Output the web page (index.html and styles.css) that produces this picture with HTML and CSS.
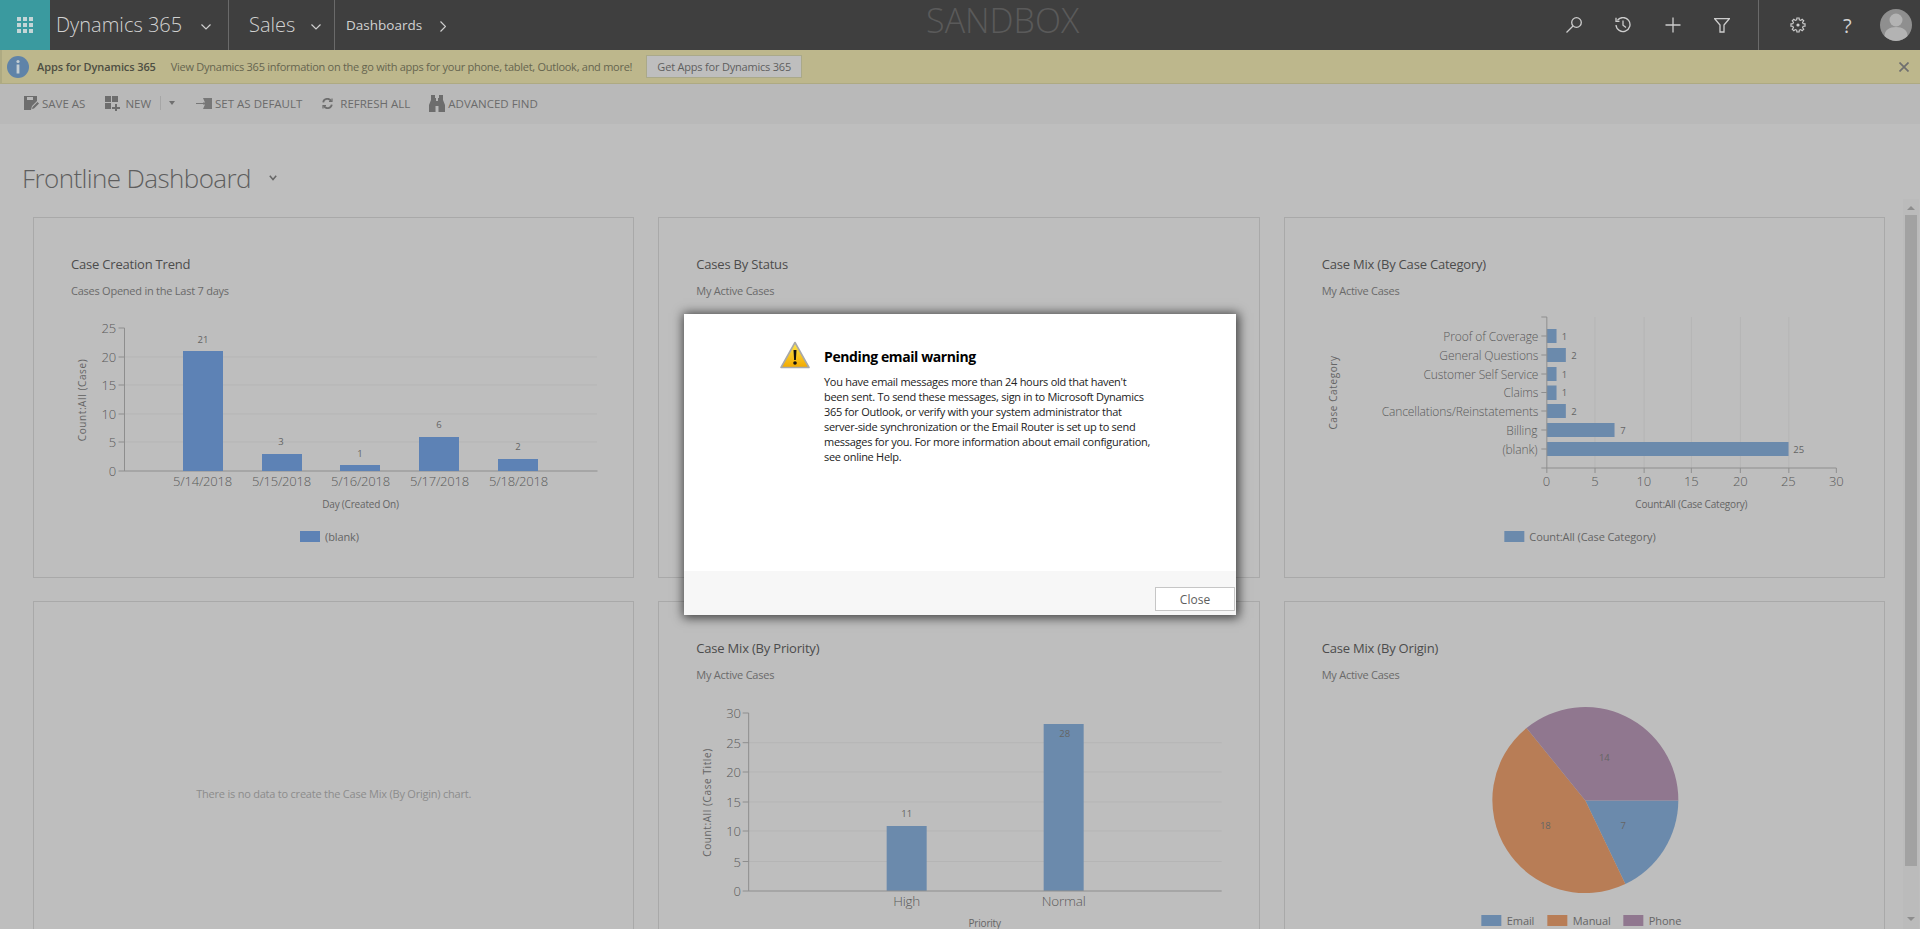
FILE: index.html
```html
<!DOCTYPE html>
<html lang="en">
<head>
  <meta charset="UTF-8">
  <title>Frontline Dashboard</title>
  <link rel="stylesheet" href="styles.css">
</head>
<body>
  <header class="topbar">
    <div class="tile">
      <svg width="16" height="16" viewBox="0 0 16 16" fill="#c4d6d7"><path d="M0 0h4v4H0zM6 0h4v4H6zM12 0h4v4h-4zM0 6h4v4H0zM6 6h4v4H6zM12 6h4v4h-4zM0 12h4v4H0zM6 12h4v4H6zM12 12h4v4h-4z"/></svg>
    </div>
    <div class="nav nav-app">
      <span>Dynamics 365</span>
      <svg class="chev" width="10" height="6" viewBox="0 0 10 6"><path d="M.5.5 5 5 9.500.5"/></svg>
    </div>
    <div class="nav nav-area">
      <span>Sales</span>
      <svg class="chev" width="10" height="6" viewBox="0 0 10 6"><path d="M.5.5 5 5 9.500.5"/></svg>
    </div>
    <div class="nav nav-page">
      <span>Dashboards</span>
      <svg class="chev" width="6" height="11" viewBox="0 0 6 11"><path d="M.5.5 5.500 5.500.5 10.500"/></svg>
    </div>
    <div class="env">SANDBOX</div>
    <div class="tools">
      <div class="tool">
        <svg class="line" width="16" height="16" viewBox="0 0 16 16"><circle cx="10.500" cy="5.500" r="4.800"/><path d="M7 9 .5 15.500"/></svg>
      </div>
      <div class="tool">
        <svg class="line" width="16" height="16" viewBox="0 0 16 16"><path d="M2.400 3.300A7 7 0 1 1 1 8"/><path d="M1 .8v3.500h3.500M8 3.500v4.700l3 2.300"/></svg>
      </div>
      <div class="tool">
        <svg class="line" width="16" height="16" viewBox="0 0 16 16"><path d="M8 .5v15M.5 8h15"/></svg>
      </div>
      <div class="tool">
        <svg class="line" width="16" height="15" viewBox="0 0 16 15"><path d="M.5.5h15L10 7v7H6V7z"/></svg>
      </div>
    </div>
    <div class="tools tools-user">
      <div class="tool">
        <svg class="line" width="16" height="16" viewBox="-9 -9 18 18"><polygon points="5.820,-1.450 7.900,-1.250 7.900,1.250 5.820,1.450 5.140,3.090 6.470,4.700 4.700,6.470 3.090,5.140 1.450,5.820 1.250,7.900 -1.250,7.900 -1.450,5.820 -3.090,5.140 -4.700,6.470 -6.470,4.700 -5.140,3.090 -5.820,1.450 -7.900,1.250 -7.900,-1.250 -5.820,-1.450 -5.140,-3.090 -6.470,-4.700 -4.700,-6.470 -3.090,-5.140 -1.450,-5.820 -1.250,-7.900 1.250,-7.900 1.450,-5.820 3.090,-5.140 4.700,-6.470 6.470,-4.700 5.140,-3.090"/><circle cx="0" cy="0" r="1.800" class="dot"/></svg>
      </div>
      <div class="tool help">?</div>
      <svg class="avatar" width="32" height="32" viewBox="0 0 32 32"><circle cx="16" cy="16" r="16" fill="#8f8f8f"/><circle cx="16" cy="11" r="6.500" fill="#b3b3b3"/><path d="M4.500 27c0-6 5-9 11.500-9s11.500 3 11.500 9a16 16 0 0 1-23 0z" fill="#b3b3b3"/></svg>
    </div>
  </header>

  <div class="notice">
    <svg class="info" width="22" height="22" viewBox="0 0 22 22"><circle cx="11" cy="11" r="11" fill="#5f83a8"/><circle cx="11" cy="5.500" r="1.600" fill="#c3cdd2"/><rect x="9.600" y="8.500" width="2.800" height="9" fill="#c3cdd2"/></svg>
    <strong class="notice-title">Apps for Dynamics 365</strong>
    <span class="notice-text">View Dynamics 365 information on the go with apps for your phone, tablet, Outlook, and more!</span>
    <button class="notice-btn">Get Apps for Dynamics 365</button>
    <svg class="notice-close" width="10" height="10" viewBox="0 0 10 10"><path d="M.5.5l9 9M9.500.5l-9 9"/></svg>
  </div>

  <div class="toolbar">
    <div class="cmd cmd-save">
      <svg width="15" height="15" viewBox="0 0 15 15" fill="#6d6d6d"><path d="M0 0h13v5l-5 5-1 4H0zM3 1v3h6V1zM8.500 11l5-5 1.500 1.500-5 5-2 .5z"/></svg>
      <span>SAVE AS</span>
    </div>
    <div class="cmd cmd-new">
      <svg width="15" height="15" viewBox="0 0 15 15" fill="#6d6d6d"><path d="M0 0h6v6H0zM7 0h6v6H7zM0 7h6v6H0zM10 8h2v3h3v2h-3v2h-2v-2H7v-2h3z"/></svg>
      <span>NEW</span>
    </div>
    <i class="cmd-sep"></i>
    <i class="cmd-caret"></i>
    <div class="cmd cmd-default">
      <svg width="16" height="11" viewBox="0 0 16 11" fill="#777"><path d="M0 5h7V4.500h2L7 0h9v11H7l2-4.500H7V6H0z"/></svg>
      <span>SET AS DEFAULT</span>
    </div>
    <div class="cmd cmd-refresh">
      <svg width="11" height="11" viewBox="0 0 11 11" fill="none" stroke="#6d6d6d" stroke-width="1.800"><path d="M1.200 4.300A4.200 4.200 0 0 1 9 3M9.800 6.700A4.200 4.200 0 0 1 2 8"/><path d="M10 .5V3.500H7M1 10.500V7.500h3" stroke-width="1.200"/></svg>
      <span>REFRESH ALL</span>
    </div>
    <div class="cmd cmd-find">
      <svg width="16" height="17" viewBox="0 0 16 17" fill="#6d6d6d"><path d="M2 0h4v3h1v3h2V3h1V0h4v5l2 5v7H9.500v-6h-3v6H0v-7l2-5z"/></svg>
      <span>ADVANCED FIND</span>
    </div>
  </div>

  <div class="heading">
    <h1>Frontline Dashboard</h1>
    <svg class="heading-chev" width="8" height="6" viewBox="0 0 8 6"><path d="M.8.8 4 4.500 7.200.8"/></svg>
  </div>

  <main class="workspace">
    <div class="grid">
      <section class="card">
        <h2>Case Creation Trend</h2>
        <p>Cases Opened in the Last 7 days</p>
        <svg class="chart" width="600" height="272" viewBox="34 305 600 272">
          <path class="grid-line" d="M125 357h472M125 385h472M125 414h472M125 442h472"/>
          <path class="axis" d="M118.500 328h6v143M118.500 471h479M118.500 357h6M118.500 385h6M118.500 414h6M118.500 442h6"/>
          <g class="tick end">
            <text x="116" y="328">25</text><text x="116" y="357">20</text><text x="116" y="385">15</text>
            <text x="116" y="414">10</text><text x="116" y="442">5</text><text x="116" y="471">0</text>
          </g>
          <g fill="#5d82b5">
            <rect x="183" y="351" width="40" height="120"/>
            <rect x="262" y="454" width="40" height="17"/>
            <rect x="340" y="465" width="40" height="6"/>
            <rect x="419" y="437" width="40" height="34"/>
            <rect x="498" y="459" width="40" height="12"/>
          </g>
          <g class="val">
            <text x="203" y="339">21</text><text x="281" y="441">3</text><text x="360" y="453">1</text>
            <text x="439" y="424">6</text><text x="518" y="446">2</text>
          </g>
          <g class="tick mid">
            <text x="202.500" y="481">5/14/2018</text><text x="281.500" y="481">5/15/2018</text><text x="360.500" y="481">5/16/2018</text>
            <text x="439.500" y="481">5/17/2018</text><text x="518.500" y="481">5/18/2018</text>
          </g>
          <text class="axis-title" x="360.500" y="504">Day (Created On)</text>
          <text class="axis-title side" x="82" y="400" transform="rotate(-90 82 400)">Count:All (Case)</text>
          <rect x="300" y="531" width="20" height="11" fill="#5d82b5"/>
          <text class="legend" x="325" y="536">(blank)</text>
        </svg>
      </section>

      <section class="card">
        <h2>Cases By Status</h2>
        <p>My Active Cases</p>
      </section>

      <section class="card">
        <h2>Case Mix (By Case Category)</h2>
        <p>My Active Cases</p>
        <svg class="chart" width="600" height="272" viewBox="1284.670 305 600 272">
          <path class="grid-line" d="M1594.700 317v151M1643.800 317v151M1691 317v151M1740 317v151M1788.500 317v151"/>
          <g fill="#6b8aac">
            <rect x="1546.500" y="329" width="9.700" height="14"/>
            <rect x="1546.500" y="348" width="19" height="14"/>
            <rect x="1546.500" y="367" width="9.700" height="14"/>
            <rect x="1546.500" y="385.500" width="9.700" height="14.500"/>
            <rect x="1546.500" y="404" width="19" height="14"/>
            <rect x="1546.500" y="423" width="67.700" height="14"/>
            <rect x="1546.500" y="442" width="241.700" height="14"/>
          </g>
          <path class="axis" d="M1541 317h5.500v151M1541 468h295M1541 336h5.500M1541 355h5.500M1541 374h5.500M1541 392.500h5.500M1541 411h5.500M1541 430h5.500M1541 449h5.500M1546.500 468v5M1594.700 468v5M1643.800 468v5M1691 468v5M1740 468v5M1788.500 468v5M1836 468v5"/>
          <g class="tick end cat">
            <text x="1538" y="336">Proof of Coverage</text><text x="1538" y="355">General Questions</text><text x="1538" y="374">Customer Self Service</text>
            <text x="1538" y="392.500">Claims</text><text x="1538" y="411">Cancellations/Reinstatements</text><text x="1537" y="430">Billing</text><text x="1537" y="449">(blank)</text>
          </g>
          <g class="val start">
            <text x="1561.500" y="336">1</text><text x="1571" y="355">2</text><text x="1561.500" y="374">1</text>
            <text x="1561.500" y="392.500">1</text><text x="1571" y="411">2</text><text x="1620" y="430">7</text><text x="1793" y="449">25</text>
          </g>
          <g class="tick mid">
            <text x="1546" y="481">0</text><text x="1594.500" y="481">5</text><text x="1643.500" y="481">10</text><text x="1691" y="481">15</text>
            <text x="1740" y="481">20</text><text x="1788" y="481">25</text><text x="1836" y="481">30</text>
          </g>
          <text class="axis-title" x="1691" y="504">Count:All (Case Category)</text>
          <text class="axis-title side" x="1333" y="392.500" transform="rotate(-90 1333 392.500)">Case Category</text>
          <rect x="1504" y="531" width="20" height="11" fill="#6b8aac"/>
          <text class="legend" x="1529" y="536">Count:All (Case Category)</text>
        </svg>
      </section>

      <section class="card card-empty">
        <div class="empty-msg">There is no data to create the Case Mix (By Origin) chart.</div>
      </section>

      <section class="card">
        <h2>Case Mix (By Priority)</h2>
        <p>My Active Cases</p>
        <svg class="chart" width="600" height="272" viewBox="659.330 689 600 272">
          <path class="grid-line" d="M749 742.700h473M749 772h473M749 802h473M749 831h473M749 861.500h473"/>
          <g fill="#6b8aac">
            <rect x="887" y="826" width="40" height="65"/>
            <rect x="1044" y="724" width="40" height="167"/>
          </g>
          <path class="axis" d="M743 713h6v178M743 891h479M743 742.700h6M743 772h6M743 802h6M743 831h6M743 861.500h6"/>
          <g class="tick end">
            <text x="741" y="713">30</text><text x="741" y="742.700">25</text><text x="741" y="772">20</text><text x="741" y="802">15</text>
            <text x="741" y="831">10</text><text x="741" y="861.500">5</text><text x="741" y="891">0</text>
          </g>
          <g class="val">
            <text x="907" y="813">11</text><text x="1065" y="733.500">28</text>
          </g>
          <g class="tick mid large">
            <text x="907" y="901">High</text><text x="1064" y="901">Normal</text>
          </g>
          <text class="axis-title" x="985" y="923">Priority</text>
          <text class="axis-title side" x="707" y="802.500" transform="rotate(-90 707 802.500)">Count:All (Case Title)</text>
        </svg>
      </section>

      <section class="card">
        <h2>Case Mix (By Origin)</h2>
        <p>My Active Cases</p>
        <svg class="chart" width="600" height="272" viewBox="1284.670 689 600 272">
          <path d="M1585 800.500h93A93 93 0 0 1 1625 884z" fill="#6b8aac"/>
          <path d="M1585 800.500 1625 884A93 93 0 0 1 1526.200 728z" fill="#b87d56"/>
          <path d="M1585 800.500 1526.200 728A93 93 0 0 1 1678 800.500z" fill="#90778f"/>
          <g class="val">
            <text x="1604" y="757">14</text><text x="1545" y="825">18</text><text x="1623" y="825">7</text>
          </g>
          <rect x="1481" y="915" width="20" height="11" fill="#6b8aac"/>
          <text class="legend" x="1506.500" y="920.500">Email</text>
          <rect x="1547" y="915" width="20" height="11" fill="#b87d56"/>
          <text class="legend" x="1572.500" y="920.500">Manual</text>
          <rect x="1623" y="915" width="20" height="11" fill="#90778f"/>
          <text class="legend" x="1648.500" y="920.500">Phone</text>
        </svg>
      </section>
    </div>

    <div class="scrollbar">
      <i class="arrow-up"></i>
      <div class="thumb"></div>
      <i class="arrow-down"></i>
    </div>
  </main>

  <div class="dialog">
    <div class="dialog-body">
      <svg class="warn" width="30" height="28" viewBox="0 0 30 28">
        <defs>
          <linearGradient id="warnFill" x1="0" y1="0" x2="0" y2="1">
            <stop offset="0" stop-color="#ffe84d"/>
            <stop offset="1" stop-color="#f2a900"/>
          </linearGradient>
        </defs>
        <path d="M15 1.500 29 26.500H1z" fill="url(#warnFill)" stroke="#a9a9a9" stroke-width="1.600" stroke-linejoin="round"/>
        <path d="M13.500 9h3l-.6 10h-1.800z" fill="#111"/>
        <circle cx="15" cy="22" r="1.800" fill="#111"/>
      </svg>
      <div class="dialog-copy">
        <h3>Pending email warning</h3>
        <p>You have email messages more than 24 hours old that haven't<br>
        been sent. To send these messages, sign in to Microsoft Dynamics<br>
        365 for Outlook, or verify with your system administrator that<br>
        server-side synchronization or the Email Router is set up to send<br>
        messages for you. For more information about email configuration,<br>
        see online Help.</p>
      </div>
    </div>
    <div class="dialog-foot">
      <button class="dialog-btn">Close</button>
    </div>
  </div>
</body>
</html>
```

FILE: styles.css
```css
* {
  box-sizing: border-box;
}
html, body {
  height: 100%;
  margin: 0;
  overflow: hidden;
}
body {
  display: flex;
  flex-direction: column;
  font-family: "Open Sans", "Noto Sans", sans-serif;
  background: #bebebe;
  color: #5e5e5e;
}

/* top bar */
.topbar {
  height: 50px;
  flex: none;
  display: flex;
  align-items: stretch;
  background: #3f3f3f;
  color: #d2d2d2;
}
.tile {
  width: 50px;
  background: #3a9a9f;
  display: flex;
  align-items: center;
  justify-content: center;
}
.nav {
  display: flex;
  align-items: center;
  border-right: 1px solid #6a6a6a;
}
.nav-app {
  width: 179px;
  padding-left: 6px;
  font-size: 20px;
  font-weight: 300;
  gap: 19px;
}
.nav-app span,
.nav-area span {
  margin-bottom: 2px;
}
.nav-area {
  width: 106px;
  padding-left: 20px;
  font-size: 20px;
  font-weight: 300;
  gap: 16px;
}
.nav-page {
  padding-left: 11px;
  border-right: 0;
  font-size: 13.500px;
  gap: 18px;
}
.chev {
  fill: none;
  stroke: #cfcfcf;
  stroke-width: 1.200;
  margin-top: 3px;
}
.env {
  margin-left: 480px;
  font-size: 34px;
  font-weight: 300;
  line-height: 40px;
  color: #5a5a5a;
}
.tools {
  display: flex;
  align-items: center;
  margin-left: auto;
}
.tools-user {
  margin-left: 11px;
  padding-left: 14px;
  padding-right: 8px;
  border-left: 1px solid #6a6a6a;
}
.tool {
  width: 49.500px;
  display: flex;
  align-items: center;
  justify-content: center;
}
.line {
  fill: none;
  stroke: #cdcdcd;
  stroke-width: 1.300;
}
.line .dot {
  fill: #cdcdcd;
  stroke: none;
}
.help {
  font-size: 20px;
  color: #d2d2d2;
}
.avatar {
  margin-left: 8px;
}

/* notification */
.notice {
  height: 34px;
  flex: none;
  display: flex;
  align-items: center;
  padding-left: 5px;
  padding-right: 11px;
  background: #bdb78c;
  border-bottom: 1px solid #aeaa82;
  border-left: 2px solid #aeaa82;
  font-size: 11px;
}
.notice-title {
  margin-left: 8px;
  font-weight: 600;
  letter-spacing: -.1px;
  color: #4e4e42;
}
.notice-text {
  margin-left: 15px;
  letter-spacing: -.27px;
  color: #66654f;
}
.notice-btn {
  margin-left: 14px;
  width: 156px;
  height: 23px;
  padding: 0;
  border: 1px solid #aaa98a;
  background: #bebebe;
  font-family: inherit;
  font-size: 11px;
  letter-spacing: -.2px;
  color: #5e5e5e;
}
.notice-close {
  margin-left: auto;
  fill: none;
  stroke: #6f6f6f;
  stroke-width: 1.700;
}

/* command bar */
.toolbar {
  height: 40px;
  flex: none;
  display: flex;
  align-items: center;
  padding-left: 24px;
  padding-bottom: 2px;
  background: #b9b9b9;
  font-size: 11.500px;
  color: #6b6b6b;
}
.cmd {
  display: flex;
  align-items: center;
  gap: 3px;
}
.cmd-new {
  margin-left: 20px;
  gap: 5px;
}
.cmd-sep {
  width: 1px;
  height: 14px;
  margin-left: 9px;
  background: #a6a6a6;
}
.cmd-caret {
  margin-left: 8px;
  border-top: 4px solid #707070;
  border-left: 3.500px solid transparent;
  border-right: 3.500px solid transparent;
}
.cmd-default {
  margin-left: 21px;
}
.cmd-refresh {
  margin-left: 20px;
  gap: 7px;
}
.cmd-find {
  margin-left: 19px;
  gap: 3px;
}

/* page heading */
.heading {
  height: 75px;
  flex: none;
  display: flex;
  align-items: center;
  gap: 18px;
  padding-left: 22px;
  padding-top: 33px;
}
h1 {
  margin: 0;
  font-size: 26px;
  font-weight: 300;
  line-height: 36px;
  letter-spacing: -.6px;
  color: #5e5e5e;
}
.heading-chev {
  fill: none;
  stroke: #666;
  stroke-width: 1.500;
}

/* dashboard */
.workspace {
  flex: 1;
  min-height: 0;
  display: flex;
  padding-left: 33px;
  overflow: hidden;
}
.grid {
  width: 1852px;
  flex: none;
  display: grid;
  grid-template-columns: repeat(3, 1fr);
  grid-auto-rows: 361px;
  gap: 23px 24px;
  padding-top: 18px;
}
.card {
  border: 1px solid #a9a9a9;
  padding-top: 37px;
  overflow: hidden;
}
.card h2 {
  margin: 0 0 0 37px;
  font-size: 13px;
  font-weight: 400;
  line-height: 18px;
  letter-spacing: -.2px;
  color: #4c4c4c;
}
.card p {
  margin: 10px 0 0 37px;
  font-size: 11px;
  line-height: 16px;
  letter-spacing: -.24px;
  color: #6a6a6a;
}
.chart {
  display: block;
  margin-top: 6px;
}
.card-empty {
  display: flex;
  justify-content: center;
  padding-top: 24px;
  align-items: center;
}
.empty-msg {
  font-size: 11px;
  letter-spacing: -.22px;
  color: #8c8c8c;
}

/* chart text */
.grid-line {
  fill: none;
  stroke: #b5b5b5;
  stroke-width: 1;
}
.axis {
  fill: none;
  stroke: #8e8e8e;
  stroke-width: 1;
}
.chart text {
  dominant-baseline: central;
  fill: #656565;
}
.chart .tick text {
  fill: #5a5a5a;
}
.tick {
  font-size: 13px;
  font-weight: 300;
  letter-spacing: -.2px;
}
.cat {
  font-size: 12px;
  letter-spacing: -.1px;
}
.large {
  font-size: 13.500px;
}
.end {
  text-anchor: end;
}
.mid {
  text-anchor: middle;
}
.val {
  font-size: 9.500px;
  text-anchor: middle;
}
.val.start {
  text-anchor: start;
}
.chart .axis-title {
  font-size: 10px;
  letter-spacing: -.2px;
  text-anchor: middle;
}
.chart .side {
  letter-spacing: .6px;
}
.legend {
  font-size: 11px;
  letter-spacing: -.1px;
}

/* scrollbar */
.scrollbar {
  width: 16px;
  margin-left: 18px;
  display: flex;
  flex-direction: column;
  align-items: center;
  background: #bbb;
}
.thumb {
  width: 12px;
  height: 651px;
  margin-top: 5px;
  background: #a2a2a2;
}
.arrow-up {
  margin-top: 7px;
  border-bottom: 4px solid #8d8d8d;
  border-left: 4px solid transparent;
  border-right: 4px solid transparent;
}
.arrow-down {
  margin-top: 51px;
  border-top: 4px solid #8d8d8d;
  border-left: 4px solid transparent;
  border-right: 4px solid transparent;
}

/* pending email dialog */
.dialog {
  position: absolute;
  left: 684px;
  top: 314px;
  width: 552px;
  height: 301px;
  display: flex;
  flex-direction: column;
  background: #fff;
  box-shadow: 1px 1px 10px 2px rgba(0, 0, 0, .65);
}
.dialog-body {
  flex: 1;
  display: flex;
  padding: 27px 0 0 96px;
  gap: 14px;
}
.dialog-copy h3 {
  margin: 7px 0 0;
  font-size: 14px;
  line-height: 18px;
  font-weight: 700;
  letter-spacing: -.4px;
  color: #000;
}
.dialog-copy p {
  margin: 8px 0 0;
  font-size: 11px;
  line-height: 15px;
  letter-spacing: -.28px;
  color: #222;
}
.dialog-foot {
  height: 44px;
  flex: none;
  display: flex;
  justify-content: flex-end;
  align-items: flex-end;
  padding: 0 1px 4px 0;
  background: #f7f7f7;
}
.dialog-btn {
  width: 80px;
  height: 24px;
  padding: 0;
  background: #fff;
  border: 1px solid #c6c6c6;
  font-family: inherit;
  font-size: 12px;
  color: #5e5e5e;
}
```
